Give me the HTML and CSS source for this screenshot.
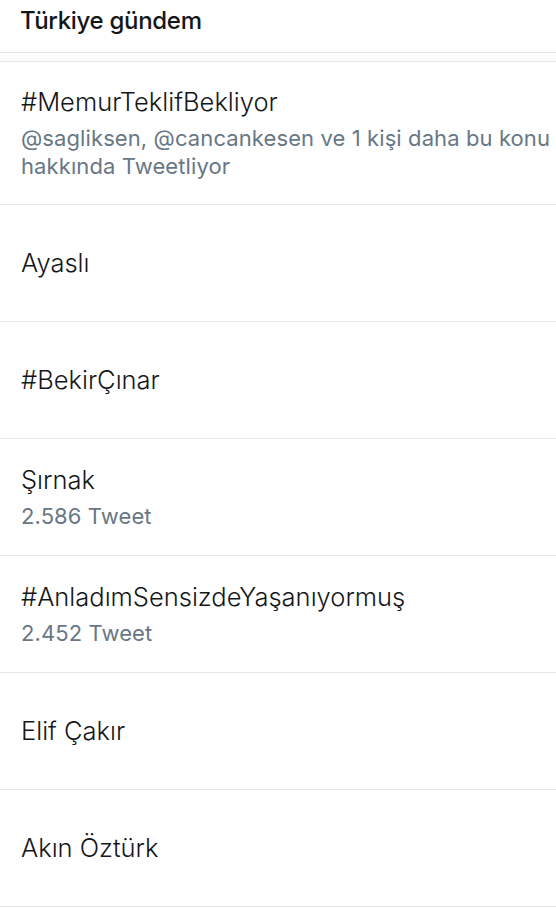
FILE: index.html
```html
<!DOCTYPE html>
<html lang="tr">
<head>
<meta charset="utf-8">
<link rel="stylesheet" href="styles.css">
</head>
<body>
<header class="header"><h1 class="header-title">Türkiye gündem</h1></header>
<div class="spacer"></div>
<ul class="trends">
  <li class="trend trend-tall">
    <div class="trend-name">#MemurTeklifBekliyor</div>
    <div class="trend-meta">@sagliksen, @cancankesen ve 1 kişi daha bu konu hakkında Tweetliyor</div>
  </li>
  <li class="trend"><div class="trend-name">Ayaslı</div></li>
  <li class="trend"><div class="trend-name">#BekirÇınar</div></li>
  <li class="trend">
    <div class="trend-name">Şırnak</div>
    <div class="trend-meta">2.586 Tweet</div>
  </li>
  <li class="trend">
    <div class="trend-name">#AnladımSensizdeYaşanıyormuş</div>
    <div class="trend-meta">2.452 Tweet</div>
  </li>
  <li class="trend"><div class="trend-name">Elif Çakır</div></li>
  <li class="trend"><div class="trend-name">Akın Öztürk</div></li>
</ul>
</body>
</html>
```
FILE: styles.css
```css
html, body {
  margin: 0;
  padding: 0;
  background: #ffffff;
}
body {
  font-family: Inter, "Noto Sans", sans-serif;
  color: #14171a;
  width: 556px;
  overflow: hidden;
}
.header {
  height: 53px;
  box-sizing: border-box;
  padding: 6px 0 0 20px;
  border-bottom: 1px solid #e4e4e8;
}
.header-title {
  margin: 0;
  font-size: 24px;
  line-height: 30px;
  font-weight: 500;
  letter-spacing: -0.3px;
}
.spacer {
  height: 8px;
  background: #fcfcfd;
  border-bottom: 1px solid #e8e8ec;
}
.trends {
  list-style: none;
  margin: 0;
  padding: 0;
}
.trend {
  height: 116px;
  border-bottom: 1px solid #e8e8ec;
  display: flex;
  flex-direction: column;
  justify-content: center;
  padding: 0 2px 0 21px;
}
.trend-tall {
  height: 142px;
}
.trend-name {
  font-size: 25.5px;
  line-height: 30px;
  font-weight: 300;
}
.trend-meta {
  font-size: 22px;
  line-height: 28px;
  color: #687785;
  letter-spacing: 0.1px;
  margin-top: 7px;
}
```
